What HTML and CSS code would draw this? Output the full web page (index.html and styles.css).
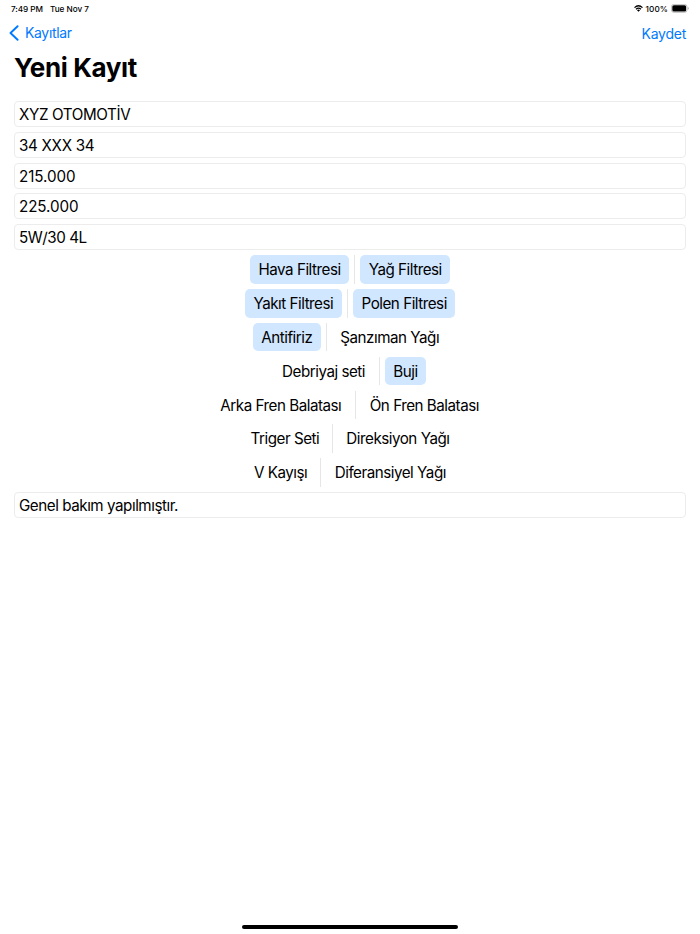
FILE: index.html
```html
<!DOCTYPE html>
<html lang="tr">
<head>
<meta charset="utf-8">
<title>Yeni Kayıt</title>
<link rel="stylesheet" href="styles.css">
</head>
<body>
<div class="screen">
  <header class="status">
    <span class="time">7:49 PM</span><span class="date">Tue Nov 7</span>
    <div class="indicators">
      <svg class="wifi" width="9" height="7" viewBox="0 0 18 14"><g fill="none" stroke="#000" stroke-width="2.5"><path d="M1 5.2Q9-2.2 17 5.2"/><path d="M4 8.4Q9 3.9 14 8.4"/></g><path d="M5.9 10.3Q9 7.9 12.1 10.3L9 13.5Z"/></svg>
      <span class="percent">100%</span>
      <svg class="battery" width="18" height="9" viewBox="0 0 18 9"><rect x=".4" y=".4" width="15.6" height="8" rx="2.4" fill="#fff" stroke="#aaa" stroke-width=".7"/><rect x="1.3" y="1.3" width="13.8" height="6.2" rx="1.5"/><path d="M16.8 3v2.8q1-.4 1-1.4t-1-1.4" fill="#aaa"/></svg>
    </div>
  </header>
  <nav class="nav">
    <a class="back"><svg width="10" height="16" viewBox="0 0 10 16"><path d="M8.6 1.2 1.5 8l7.1 6.8" fill="none" stroke="#007aff" stroke-width="1.9" stroke-linecap="round" stroke-linejoin="round"/></svg><span>Kayıtlar</span></a>
    <a class="save">Kaydet</a>
  </nav>
  <h1 class="title">Yeni Kayıt</h1>
  <main class="form">
    <div class="fields">
      <div class="field caps">XYZ OTOMOTİV</div>
      <div class="field plate">34 XXX 34</div>
      <div class="field number">215.000</div>
      <div class="field number">225.000</div>
      <div class="field oil">5W/30 4L</div>
    </div>
    <div class="options">
      <div class="row"><span class="chip on w-hava">Hava Filtresi</span><i class="divider"></i><span class="chip on w-yag">Yağ Filtresi</span></div>
      <div class="row"><span class="chip on w-yakit">Yakıt Filtresi</span><i class="divider"></i><span class="chip on w-polen">Polen Filtresi</span></div>
      <div class="row"><span class="chip on w-antifiriz">Antifiriz</span><i class="divider"></i><span class="chip w-sanziman">Şanzıman Yağı</span></div>
      <div class="row"><span class="chip w-debriyaj">Debriyaj seti</span><i class="divider"></i><span class="chip on w-buji">Buji</span></div>
      <div class="row"><span class="chip w-arka">Arka Fren Balatası</span><i class="divider"></i><span class="chip w-on">Ön Fren Balatası</span></div>
      <div class="row"><span class="chip w-triger">Triger Seti</span><i class="divider"></i><span class="chip w-direksiyon">Direksiyon Yağı</span></div>
      <div class="row"><span class="chip w-kayis">V Kayışı</span><i class="divider"></i><span class="chip w-diferansiyel">Diferansiyel Yağı</span></div>
    </div>
    <div class="field note">Genel bakım yapılmıştır.</div>
  </main>
  <div class="home"></div>
</div>
</body>
</html>
```
FILE: styles.css
```css
* { box-sizing: border-box; }
body { margin: 0; background: #fff; color: #000; font-family: Inter, "Liberation Sans", sans-serif; }
.screen { width: 700px; height: 934px; display: flex; flex-direction: column; overflow: hidden; white-space: nowrap; }
.status { height: 17px; padding: 0 11px; display: flex; align-items: center; font-size: 8.2px; font-weight: 500; }
.time { width: 39px; letter-spacing: -.05px; }
.date { letter-spacing: -.03px; }
.indicators { margin-left: auto; display: flex; align-items: center; }
.wifi { margin-right: 1px; }
.percent { margin: 0 3px 0 2px; letter-spacing: .1px; }
.nav { height: 33px; padding: 0 14px 0 9px; display: flex; justify-content: space-between; align-items: center; color: #007aff; font-size: 14px; letter-spacing: -.35px; }
.back { display: flex; align-items: center; gap: 6px; margin-top: -2px; }
.save { letter-spacing: -.25px; }
.title { height: 51px; margin: 0; padding: 3px 14px 0; font-size: 26px; line-height: 30px; font-weight: 700; letter-spacing: -.38px; }
.form { padding: 0 14px; font-size: 15.2px; letter-spacing: -.48px; }
.fields { display: grid; gap: 4.8px; }
.field { height: 26px; padding: 0 4px; border: 1px solid #ececec; border-radius: 4px; line-height: 25.4px; }
.caps { letter-spacing: -.38px; }
.plate { letter-spacing: -.3px; }
.number { letter-spacing: -.08px; }
.oil { letter-spacing: -.45px; }
.options { display: grid; gap: 5.5px; padding: 5.3px 0 5.9px; }
.row { display: flex; justify-content: center; gap: 5.2px; }
.chip { height: 28.3px; line-height: 29.9px; border-radius: 5px; text-align: center; }
.on { background: #d1e6ff; }
.divider { width: 1px; background: #e6e6e6; }
.w-hava { width: 99px; }
.w-yag { width: 89.5px; }
.w-yakit { width: 97px; }
.w-polen { width: 102px; }
.w-antifiriz { width: 68px; }
.w-sanziman { width: 115px; }
.w-debriyaj { width: 99.5px; }
.w-buji { width: 41.5px; }
.w-arka { width: 137.3px; }
.w-on { width: 127px; }
.w-triger { width: 84.5px; }
.w-direksiyon { width: 118.7px; }
.w-kayis { width: 69.3px; }
.w-diferansiyel { width: 127.5px; }
.note { letter-spacing: -.46px; }
.home { width: 216px; height: 4px; margin: auto auto 5.5px; border-radius: 2px; background: #000; }
```
